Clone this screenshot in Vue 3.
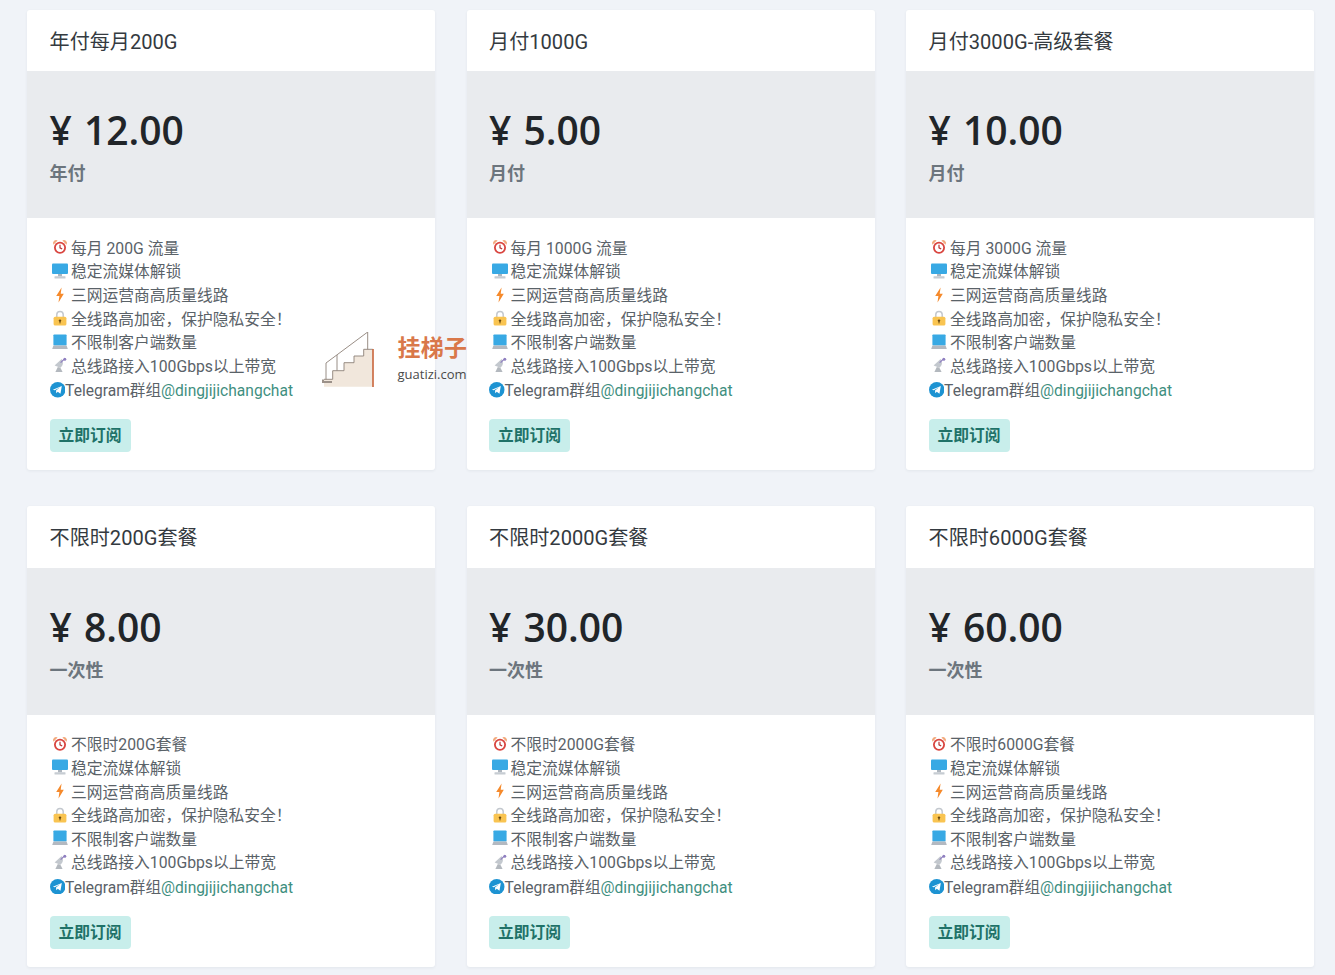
<script setup>
const common = ['稳定流媒体解锁', '三网运营商高质量线路', '全线路高加密\uFF0C保护隐私安全\uFF01', '不限制客户端数量', '总线路接入100Gbps以上带宽']
const plans = [
  { title: '年付每月200G', price: '12.00', period: '年付', first: '每月 200G 流量' },
  { title: '月付1000G', price: '5.00', period: '月付', first: '每月 1000G 流量' },
  { title: '月付3000G-高级套餐', price: '10.00', period: '月付', first: '每月 3000G 流量' },
  { title: '不限时200G套餐', price: '8.00', period: '一次性', first: '不限时200G套餐' },
  { title: '不限时2000G套餐', price: '30.00', period: '一次性', first: '不限时2000G套餐' },
  { title: '不限时6000G套餐', price: '60.00', period: '一次性', first: '不限时6000G套餐' }
]
const kinds = ['monitor', 'bolt', 'lock', 'laptop', 'dish']
</script>

<template>
  <main class="page">
    <section class="grid">
      <article v-for="p in plans" :key="p.title" class="card">
        <header class="card-head">{{ p.title }}</header>
        <div class="price-box">
          <div class="price">¥ {{ p.price }}</div>
          <div class="period">{{ p.period }}</div>
        </div>
        <div class="card-body">
          <ul class="features">
            <li class="feature">
              <svg class="ico" viewBox="0 0 16 16">
                <path d="M1.4 5.8A3.2 3.2 0 0 1 5.6 1.4z" fill="#f2a97c" />
                <path d="M14.6 5.8A3.2 3.2 0 0 0 10.4 1.4z" fill="#f2a97c" />
                <circle cx="8" cy="8.8" r="6" fill="#d9453f" />
                <circle cx="8" cy="8.8" r="4.2" fill="#fff" />
                <path d="M8 5.8v3l2.2 1.2" fill="none" stroke="#b93232" stroke-width="1.2" />
              </svg>
              <span>{{ p.first }}</span>
            </li>
            <li v-for="(text, i) in common" :key="text" class="feature">
              <svg v-if="kinds[i] === 'monitor'" class="ico" viewBox="0 0 16 16">
                <rect x="0" y=".6" width="16" height="10.4" rx="1" fill="#38a9e4" />
                <rect x="6" y="11" width="4" height="2.4" fill="#aeb6be" />
                <rect x="2.5" y="13.2" width="11" height="2.2" rx=".5" fill="#c6ccd2" />
              </svg>
              <svg v-else-if="kinds[i] === 'bolt'" class="ico" viewBox="0 0 16 16">
                <path d="M9.6 .4 4.2 9h3.2l-.9 6.6L11.8 6.8H8.7z" fill="#f58a2c" />
              </svg>
              <svg v-else-if="kinds[i] === 'lock'" class="ico" viewBox="0 0 16 16">
                <path d="M4.8 8V4.6a3.2 3.2 0 0 1 6.4 0V8" fill="none" stroke="#c3c8ce" stroke-width="1.5" />
                <rect x="1.6" y="6.8" width="12.8" height="8.8" rx="1.5" fill="#f9c451" />
                <circle cx="8" cy="10.6" r="1.2" fill="#6b4a10" />
                <rect x="7.5" y="10.8" width="1" height="2.6" fill="#6b4a10" />
              </svg>
              <svg v-else-if="kinds[i] === 'laptop'" class="ico" viewBox="0 0 16 16">
                <rect x="1.4" y=".4" width="13.2" height="11.2" rx=".8" fill="#38a9e4" />
                <path d="M1.4 11.6h13.2l1.2 3.4H.2z" fill="#b3b9c1" />
              </svg>
              <svg v-else class="ico" viewBox="0 0 16 16">
                <path d="M2.6 8.4 9.6 2c2 3 1.8 6.2-1.2 8.8z" fill="#c3c8ce" />
                <path d="M5.8 10 3.4 15h7.2L8.4 10.8z" fill="#b3b8be" />
                <path d="M8.6 5.6 12 2.4" stroke="#8f7fc0" stroke-width="1.3" />
                <circle cx="12.8" cy="2.2" r="1.5" fill="#8f7fc0" />
              </svg>
              <span>{{ text }}</span>
            </li>
            <li class="feature tg">
              <svg class="tg-ico" viewBox="0 0 16 16">
                <circle cx="8" cy="8" r="8" fill="#1d93d2" />
                <path d="M3 8 12.2 4.2 10.8 12 8 10l-1.5 1.5-.3-2.6 4.3-3.4-5.6 3z" fill="#fff" />
              </svg>
              <span>Telegram群组<a class="link">@dingjijichangchat</a></span>
            </li>
          </ul>
          <button class="subscribe" type="button">立即订阅</button>
        </div>
      </article>
    </section>
    <aside class="watermark">
      <svg class="stairs" viewBox="0 0 56 56">
        <path d="M2 54.7V47.3H10.7V38.7H22V30.7H32V24H41.7V17.3H50.7V54.7z" fill="#f1e7dc" />
        <path d="M2 47.3H10.7V38.7H22V30.7H32V24H41.7V17.3H50.7" fill="none" stroke="#8d8178" stroke-width=".9" />
        <path d="M51 17V55" stroke="#c9643a" stroke-width="1.6" />
        <path d="M1 47.5V50H10" fill="none" stroke="#9b9189" stroke-width="2" />
        <path d="M4 31 45.7 0V17.3M4 31V47.3M15 23V38.7" fill="none" stroke="#8d8178" stroke-width=".9" />
      </svg>
      <div class="wm-text">
        <div class="wm-cn">挂梯子</div>
        <div class="wm-en">guatizi.com</div>
      </div>
    </aside>
  </main>
</template>

<style scoped>
.page {
  position: relative;
  box-sizing: border-box;
  width: 1335px;
  height: 975px;
  padding: 9.5px 21px 0 27px;
  overflow: hidden;
  background: #f0f3f8;
  font-family: Roboto, "Noto Sans CJK SC", sans-serif;
}
.grid {
  display: grid;
  grid-template-columns: repeat(3, 408px);
  column-gap: 31.5px;
  row-gap: 36px;
}
.card {
  display: flex;
  flex-direction: column;
  height: 460.5px;
  background: #fff;
  border-radius: 3px;
  overflow: hidden;
  box-shadow: 0 1px 3px rgba(60, 70, 90, .07);
}
.card-head {
  height: 61.5px;
  padding: 0 22.6px;
  font-size: 20.1px;
  line-height: 65px;
  color: #343a40;
}
.price-box {
  height: 147px;
  box-sizing: border-box;
  padding: 29px 22.6px 0;
  background: #e9ebee;
}
.price {
  font-family: "Open Sans", "Noto Sans CJK SC", sans-serif;
  font-size: 39px;
  line-height: 59.4px;
  font-weight: 550;
  word-spacing: 2px;
  color: #212529;
}
.period {
  margin-top: 1px;
  font-size: 18px;
  line-height: 27px;
  font-weight: 700;
  color: #6c757d;
}
.card-body {
  padding: 17.5px 22.6px 0;
}
.features {
  margin: 0;
  padding: 0;
  list-style: none;
}
.feature {
  display: flex;
  align-items: center;
  height: 23.63px;
  font-size: 15.75px;
  white-space: nowrap;
  color: #5a6268;
}
.ico {
  flex: none;
  width: 16px;
  height: 16px;
  margin: 0 3px 0 2.5px;
}
.tg-ico {
  flex: none;
  width: 15.5px;
  height: 15.5px;
  margin-top: 2px;
}
.tg {
  font-size: 15.6px;
}
.link {
  color: #3f8f7f;
}
.subscribe {
  display: block;
  width: 81px;
  height: 33px;
  margin-top: 18.4px;
  padding: 0 0 2px;
  border: 0;
  border-radius: 4px;
  background: #c8eeeb;
  color: #1f7268;
  font-family: inherit;
  font-size: 15.75px;
  font-weight: 700;
}
.watermark {
  position: absolute;
  left: 322px;
  top: 333px;
  display: flex;
  gap: 19.5px;
  align-items: flex-start;
}
.stairs {
  margin-top: -1px;
  width: 56px;
  height: 56px;
}
.wm-text {
  display: flex;
  flex-direction: column;
}
.wm-cn {
  font-size: 23px;
  line-height: 32px;
  font-weight: 700;
  letter-spacing: .3px;
  color: #d9784a;
}
.wm-en {
  margin-top: 1px;
  font-family: "Open Sans", sans-serif;
  font-size: 13px;
  line-height: 17px;
  color: #4a4a4a;
}
</style>

<style>
html, body { background: #f0f3f8; }
</style>
